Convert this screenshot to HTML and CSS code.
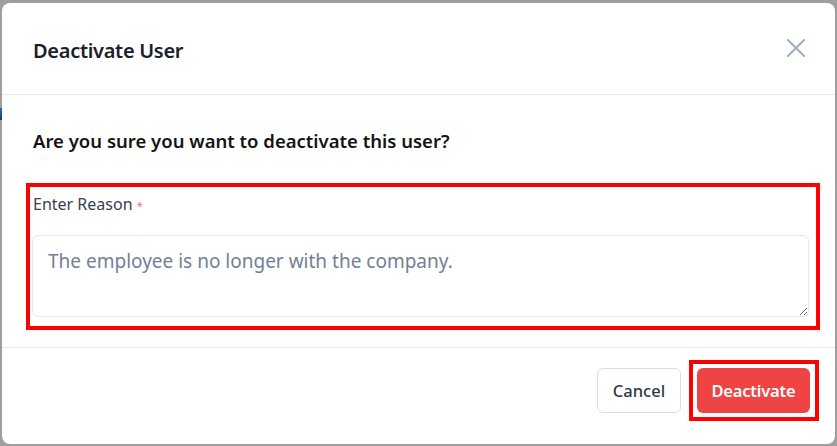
FILE: index.html
```html
<!DOCTYPE html>
<html lang="en">
<head>
<meta charset="utf-8">
<title>Deactivate User</title>
<link rel="stylesheet" href="styles.css">
</head>
<body>
<div class="backdrop">
  <span class="peek"></span>
  <div class="modal" role="dialog" aria-labelledby="dlg-title">
    <header class="modal-header">
      <h2 id="dlg-title" class="modal-title">Deactivate User</h2>
      <button class="close-btn" aria-label="Close">
        <svg width="18" height="18" viewBox="0 0 18 18" fill="none" stroke="currentColor" stroke-width="2" stroke-linecap="round">
          <path d="M1 1 L17 17 M17 1 L1 17"/>
        </svg>
      </button>
    </header>
    <div class="modal-body">
      <p class="question">Are you sure you want to deactivate this user?</p>
      <div class="field highlight">
        <label class="field-label" for="reason">Enter Reason <span class="req">*</span></label>
        <textarea id="reason" class="reason" placeholder="The employee is no longer with the company."></textarea>
      </div>
    </div>
    <footer class="modal-footer">
      <button class="btn btn-cancel">Cancel</button>
      <span class="highlight highlight-btn"><button class="btn btn-danger">Deactivate</button></span>
    </footer>
  </div>
</div>
</body>
</html>
```
FILE: styles.css
```css
* { box-sizing: border-box; }
html, body { margin: 0; padding: 0; }
body {
  width: 837px;
  height: 446px;
  overflow: hidden;
  font-family: "Noto Sans", "Open Sans", "Liberation Sans", sans-serif;
  background: #9f9f9f;
}
.backdrop {
  position: relative;
  height: 446px;
  padding: 3px 2px 2px 2px;
}
.peek {
  position: absolute;
  left: 0;
  top: 108px;
  width: 2px;
  height: 12px;
  background: linear-gradient(#2b6cb0, #1e3a5f);
}
.modal {
  background: #fff;
  border-radius: 8px;
  height: 441px;
  display: flex;
  flex-direction: column;
}
.modal-header {
  height: 92px;
  border-bottom: 1px solid #e2e8f0;
  display: flex;
  align-items: center;
  justify-content: space-between;
  padding: 3px 30px 0 31px;
}
.modal-title {
  margin: 0;
  font-size: 20px;
  font-weight: 600;
  color: #1a202c;
  letter-spacing: -0.3px;
}
.close-btn {
  border: 0;
  background: none;
  padding: 0;
  color: #a0aec0;
  display: flex;
  cursor: pointer;
  margin-top: -4px;
}
.modal-body {
  padding: 33px 15px 17px 24px;
  flex: 0 0 auto;
}
.question {
  margin: 0 0 29px 7px;
  font-size: 18.5px;
  font-weight: 600;
  color: #141414;
  line-height: 26px;
}
.highlight {
  border: 4px solid #ff0000;
}
.field {
  padding: 6px 7px 9px 2px;
}
.field-label {
  display: block;
  font-size: 16px;
  color: #374151;
  margin: 0 0 18px 1px;
  line-height: 22px;
}
.req {
  color: #f87171;
  font-size: 11px;
  vertical-align: middle;
}
.reason {
  display: block;
  width: 100%;
  height: 82px;
  border: 1px solid #e2e8f0;
  border-radius: 6px;
  padding: 12px 15px;
  font-family: inherit;
  font-size: 19px;
  line-height: 26px;
  resize: vertical;
  outline: none;
}
.reason::placeholder { color: #718096; }
.modal-footer {
  flex: 1;
  border-top: 1px solid #e2e8f0;
  display: flex;
  justify-content: flex-end;
  align-items: flex-start;
  padding: 12px 16px 0 0;
  gap: 8px;
}
.btn {
  font-family: inherit;
  font-size: 16.5px;
  height: 45px;
  border-radius: 6px;
  cursor: pointer;
}
.btn-cancel {
  margin-top: 8px;
  width: 84px;
  background: #fff;
  color: #2d3748;
  border: 1px solid #d9dee5;
  font-weight: 500;
}
.highlight-btn {
  display: block;
  padding: 4px 5px 4px 4px;
}
.btn-danger {
  display: block;
  width: 113px;
  background: #ef4444;
  color: #fff;
  border: 0;
  font-weight: 600;
  letter-spacing: -0.2px;
}
```
